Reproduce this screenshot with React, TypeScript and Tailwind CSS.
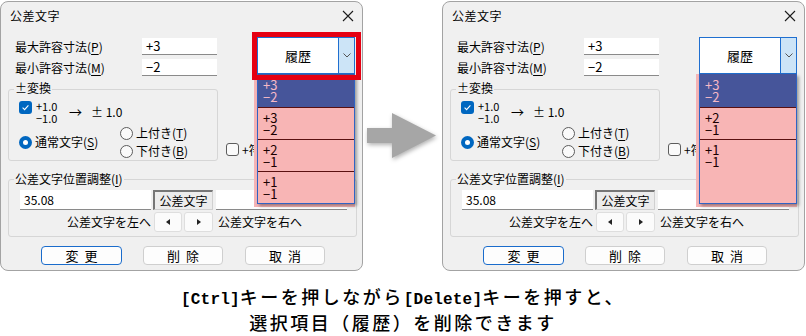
import React from 'react';

const ui = { fontFamily: '"Noto Sans CJK JP", "Noto Sans", sans-serif' };

function U({ children }: { children: React.ReactNode }) {
  return <span className="underline underline-offset-[2px]">{children}</span>;
}

function CheckBox({ checked }: { checked?: boolean }) {
  if (checked) {
    return (
      <span className="flex size-[13px] shrink-0 items-center justify-center rounded-[3px] bg-[#0067c0]">
        <svg width="9" height="9" viewBox="0 0 9 9">
          <path d="M1.6 4.7 L3.6 6.6 L7.4 2.4" fill="none" stroke="#fff" strokeWidth="1.1" />
        </svg>
      </span>
    );
  }
  return <span className="size-[13px] shrink-0 rounded-[3px] border border-[#5c5c5c] bg-[#fafafa]" />;
}

function Radio({ checked }: { checked?: boolean }) {
  if (checked) {
    return (
      <span className="flex size-[13px] shrink-0 items-center justify-center rounded-full bg-[#0067c0]">
        <span className="size-[5px] rounded-full bg-white" />
      </span>
    );
  }
  return <span className="size-[13px] shrink-0 rounded-full border border-[#5c5c5c] bg-[#fafafa]" />;
}

type Item = { a: string; b: string };

function HistoryList({ items, tall }: { items: Item[]; tall?: boolean }) {
  return (
    <>
      {/* pink marker behind the open list */}
      <div className="absolute -left-[3px] top-full right-0 z-10 h-[133px] bg-[#f5b4b6]" />
      <div className="absolute left-0 top-full z-10 flex h-[130px] w-full flex-col border-x border-b border-[#2f63c4] bg-[#f8b5b5] shadow-[2px_2px_3px_rgba(0,0,0,0.35)]">
        {items.map((it, i) => (
          <div
            key={i}
            className={
              i === 0
                ? 'h-[33px] shrink-0 bg-[#46559a] pl-[5px] pt-[5px] text-[13px] leading-[12px] text-[#f6b9c6]'
                : tall && i === items.length - 1
                  ? 'flex-1 border-t border-[#5a1010] pl-[5px] pt-[4px] text-[13px] leading-[12px] text-[#1a0000]'
                  : 'h-[32px] shrink-0 border-t border-[#5a1010] pl-[5px] pt-[4px] text-[13px] leading-[12px] text-[#1a0000]'
            }
          >
            <div>{it.a}</div>
            <div>{it.b}</div>
          </div>
        ))}
      </div>
    </>
  );
}

function Dialog({ items, marked, tall }: { items: Item[]; marked?: boolean; tall?: boolean }) {
  return (
    <div
      className="relative h-[270px] w-[363px] shrink-0 rounded-[8px] border border-[#a3a3a3] bg-[#f0f0f0] text-[12px] text-black"
      style={ui}
    >
      {/* title bar */}
      <div className="flex h-[27px] items-center justify-between pl-[9px] pr-[8px]">
        <span className="text-[12px] tracking-[0.5px]">公差文字</span>
        <svg width="12" height="12" viewBox="0 0 12 12">
          <path d="M1 1 L11 11 M11 1 L1 11" stroke="#1b1b1b" strokeWidth="1.1" />
        </svg>
      </div>

      <div className="pt-[8px]">
        <div className="flex">
          {/* left column */}
          <div className="w-[217px] pt-[1px]">
            <div className="flex h-[17px] items-center">
              <span className="ml-[14px] w-[127px]">
                最大許容寸法(<U>P</U>)
              </span>
              <div className="flex h-[17px] w-[75px] items-center border-b border-[#8a8a8a] bg-white pl-[4px] text-[13px]">
                +3
              </div>
            </div>
            <div className="mt-[4px] flex h-[17px] items-center">
              <span className="ml-[14px] w-[127px]">
                最小許容寸法(<U>M</U>)
              </span>
              <div className="flex h-[17px] w-[75px] items-center border-b border-[#8a8a8a] bg-white pl-[4px] text-[13px]">
                −2
              </div>
            </div>

            {/* ± conversion group */}
            <div className="relative ml-[7px] mt-[13px] h-[72px] w-[210px] rounded-[3px] border border-[#d6d6d6] pl-[10px] pt-[10px]">
              <span className="absolute -top-[9px] left-[5px] h-[14px] bg-[#f0f0f0] px-[1px] text-[12px] leading-[14px]">
                ±変換
              </span>
              <div className="flex h-[24px] items-start">
                <span className="mt-[1px]">
                  <CheckBox checked />
                </span>
                <div className="ml-[4px] w-[33px] text-[11px] leading-[12px]">
                  <div>+1.0</div>
                  <div>−1.0</div>
                </div>
                <span className="w-[22px] self-center text-[13px]">→</span>
                <span className="self-center text-[12px]">± 1.0</span>
              </div>
              <div className="flex h-[36px]">
                <div className="flex w-[101px] items-center gap-[3px]">
                  <Radio checked />
                  <span>
                    通常文字(<U>S</U>)
                  </span>
                </div>
                <div className="flex flex-col">
                  <div className="flex h-[18px] items-center gap-[3px]">
                    <Radio />
                    <span>
                      上付き(<U>T</U>)
                    </span>
                  </div>
                  <div className="flex h-[18px] items-center gap-[3px]">
                    <Radio />
                    <span>
                      下付き(<U>B</U>)
                    </span>
                  </div>
                </div>
              </div>
            </div>
          </div>

          {/* right column */}
          <div className="flex-1">
            <div className="relative ml-[39px] h-[37px] w-[98px]">
              <div className="relative z-0 flex h-full w-full border border-[#1f6fd0] bg-white">
                <div className="flex flex-1 items-center justify-center text-[13px]">履歴</div>
                <div className="flex w-[16px] items-center justify-center border-l border-[#1f6fd0] bg-[#cce4f7]">
                  <svg width="8" height="5" viewBox="0 0 8 5">
                    <path d="M0.5 0.5 L4 4 L7.5 0.5" fill="none" stroke="#555" strokeWidth="1" />
                  </svg>
                </div>
              </div>
              <HistoryList items={items} tall={tall} />
              {marked && (
                <div className="absolute -bottom-[6px] -left-[5px] -right-[6px] -top-[5px] z-20 border-[5px] border-[#e50012]" />
              )}
            </div>
            <div className="ml-[8px] mt-[69px] flex h-[13px] items-center gap-[3px]">
              <CheckBox />
              <span className="whitespace-nowrap">+符号付加</span>
            </div>
          </div>
        </div>

        {/* position adjust group */}
        <div className="relative ml-[7px] mt-[18px] h-[58px] w-[349px] rounded-[3px] border border-[#d6d6d6] pl-[11px] pt-[10px]">
          <span className="absolute -top-[8px] left-[5px] h-[14px] bg-[#f0f0f0] px-[1px] text-[12px] leading-[14px]">
            公差文字位置調整(<U>I</U>)
          </span>
          <div className="flex h-[20px]">
            <div className="flex w-[131px] items-center border-b border-[#8a8a8a] bg-white pl-[4px] text-[12px]">
              35.08
            </div>
            <div className="ml-[2px] flex w-[60px] items-center justify-center border border-l-2 border-t-2 border-[#d0d0d0] border-l-[#767676] border-t-[#767676] bg-[#ececec] text-[12px]">
              公差文字
            </div>
            <div className="ml-[3px] w-[131px] border-b border-[#8a8a8a] bg-white" />
          </div>
          <div className="mt-[2px] flex h-[20px] items-center">
            <span className="w-[134px] pr-[3px] text-right">公差文字を左へ</span>
            <div className="flex h-[20px] w-[28px] items-center justify-center rounded-[3px] border border-[#dedede] bg-[#fbfbfb]">
              <svg width="4" height="6" viewBox="0 0 4 6">
                <path d="M4 0 L0 3 L4 6 Z" fill="#222" />
              </svg>
            </div>
            <div className="ml-[2px] flex h-[20px] w-[29px] items-center justify-center rounded-[3px] border border-[#dedede] bg-[#fbfbfb]">
              <svg width="4" height="6" viewBox="0 0 4 6">
                <path d="M0 0 L4 3 L0 6 Z" fill="#222" />
              </svg>
            </div>
            <span className="ml-[5px]">公差文字を右へ</span>
          </div>
        </div>

        {/* buttons */}
        <div className="ml-[40px] mt-[9px] flex h-[19px] text-[13px]">
          <div className="flex w-[81px] items-center justify-center rounded-[4px] border border-[#1a6ccc] bg-[#fdfdfd] pl-[6px] tracking-[6px]">
            変更
          </div>
          <div className="ml-[21px] flex w-[80px] items-center justify-center rounded-[4px] border border-[#cfcfcf] bg-[#fdfdfd] pl-[6px] tracking-[6px]">
            削除
          </div>
          <div className="ml-[22px] flex w-[80px] items-center justify-center rounded-[4px] border border-[#cfcfcf] bg-[#fdfdfd] pl-[6px] tracking-[6px]">
            取消
          </div>
        </div>
      </div>
    </div>
  );
}

const leftItems: Item[] = [
  { a: '+3', b: '−2' },
  { a: '+3', b: '−2' },
  { a: '+2', b: '−1' },
  { a: '+1', b: '−1' },
];

const rightItems: Item[] = [
  { a: '+3', b: '−2' },
  { a: '+2', b: '−1' },
  { a: '+1', b: '−1' },
];

const mono = { fontFamily: '"Liberation Mono", monospace' };

export default function App() {
  return (
    <div className="h-[336px] w-[806px] overflow-hidden bg-white">
      <div className="flex h-[272px] pt-[1px]">
        <Dialog items={leftItems} marked />
        <div className="w-[79px] shrink-0 pl-[4px] pt-[111px]">
          <svg width="72" height="50" viewBox="0 0 72 50" className="drop-shadow-[1px_2px_2px_rgba(0,0,0,0.3)]">
            <polygon points="0,16 25,16 25,1 69,23.5 25,46 25,31 0,31" fill="#a6a6a6" />
          </svg>
        </div>
        <Dialog items={rightItems} tall />
      </div>
      <div
        className="pt-[13px] text-center text-[18px] font-medium leading-[22px] tracking-[2.5px] text-black"
        style={{ fontFamily: '"Noto Sans CJK JP", sans-serif' }}
      >
        <div>
          <span className="text-[16px] font-bold tracking-[0.2px]" style={mono}>[Ctrl]</span>
          キーを押しながら
          <span className="text-[16px] font-bold tracking-[0.2px]" style={mono}>[Delete]</span>
          キーを押すと、
        </div>
        <div>選択項目（履歴）を削除できます</div>
      </div>
    </div>
  );
}
